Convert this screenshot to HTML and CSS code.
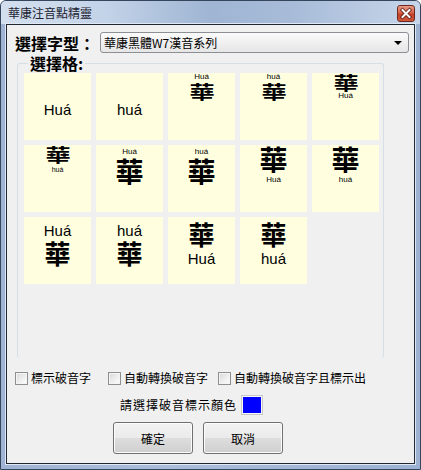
FILE: index.html
```html
<!DOCTYPE html>
<html lang="zh-Hant">
<head>
    <meta charset="UTF-8">
    <title>華康注音點精靈</title>
    <link rel="stylesheet" href="styles.css">
</head>
<body>
    <div class="window">
        <div class="titlebar">
            <span class="title">華康注音點精靈</span>
            <span class="close">
                <svg width="16" height="15" viewBox="0 0 16 15">
                    <path d="M4.5 4 L11.5 11 M11.5 4 L4.5 11" stroke="#5a1a10" stroke-width="3.6" stroke-linecap="square"/>
                    <path d="M4.5 4 L11.5 11 M11.5 4 L4.5 11" stroke="#fff" stroke-width="2" stroke-linecap="square"/>
                </svg>
            </span>
        </div>
        <div class="client">
            <div class="font-row">
                <span class="font-label">選擇字型：</span>
                <div class="select">
                    <span class="select-text">華康黑體W7漢音系列</span>
                    <span class="arrow"></span>
                </div>
            </div>

            <fieldset class="group">
                <legend>選擇格:</legend>
                <div class="grid">
                    <!-- row 1 -->
                    <div class="tile t1"><span class="py-l">Huá</span></div>
                    <div class="tile t1"><span class="py-l">huá</span></div>
                    <div class="tile t3"><span class="py-s">Huá</span><span class="han-sq">華</span></div>
                    <div class="tile t3"><span class="py-s">huá</span><span class="han-sq">華</span></div>
                    <div class="tile t5"><span class="han-sq">華</span><span class="py-s">Huá</span></div>
                    <!-- row 2 -->
                    <div class="tile t6"><span class="han-sq">華</span><span class="py-xs">huá</span></div>
                    <div class="tile t7"><span class="py-s">Huá</span><span class="han-l">華</span></div>
                    <div class="tile t7"><span class="py-s">huá</span><span class="han-l">華</span></div>
                    <div class="tile t9"><span class="han-l">華</span><span class="py-s">Huá</span></div>
                    <div class="tile t9"><span class="han-l">華</span><span class="py-s">huá</span></div>
                    <!-- row 3 -->
                    <div class="tile t11"><span class="py-l">Huá</span><span class="han-m">華</span></div>
                    <div class="tile t11"><span class="py-l">huá</span><span class="han-m">華</span></div>
                    <div class="tile t13"><span class="han-m">華</span><span class="py-l">Huá</span></div>
                    <div class="tile t13"><span class="han-m">華</span><span class="py-l">huá</span></div>
                </div>
            </fieldset>

            <div class="options">
                <label class="check"><span class="box"></span>標示破音字</label>
                <label class="check"><span class="box"></span>自動轉換破音字</label>
                <label class="check"><span class="box"></span>自動轉換破音字且標示出</label>
            </div>

            <div class="color-row">
                <span class="color-label">請選擇破音標示顏色</span>
                <span class="swatch"></span>
            </div>

            <div class="buttons">
                <button class="btn">確定</button>
                <button class="btn">取消</button>
            </div>
        </div>
    </div>
</body>
</html>
```

FILE: styles.css
```css
body {
    margin: 0;
    font-family: "Noto Sans CJK TC", sans-serif;
    font-size: 12px;
    color: #000;
}
.window {
    width: 421px;
    height: 470px;
    box-sizing: border-box;
    border: 1px solid #34455c;
    border-radius: 6px 6px 0 0;
    background: linear-gradient(to right, #9fb4d4, #a9bddb 40%, #9cb2d3);
    display: flex;
    flex-direction: column;
}
.titlebar {
    height: 23px;
    display: flex;
    align-items: flex-start;
    border-radius: 5px 5px 0 0;
    background: linear-gradient(to right, #d3dfee 0%, #c3d3e8 25%, #9fb5d3 50%, #a8bcd9 70%, #c6d5e9 100%);
}
.title {
    margin: 4px 0 0 7px;
    font-size: 12px;
    line-height: 16px;
    color: #1c2230;
}
.close {
    margin: 4px 5px 0 auto;
    width: 16px;
    height: 15px;
    border: 1px solid #6e2a1c;
    border-radius: 3px;
    background: linear-gradient(#e89a86, #d7644a 45%, #c3402a 55%, #d2583c);
    display: flex;
}
.client {
    flex: 1;
    margin: 0 5px 5px;
    border: 1px solid #202833;
    box-shadow: 0 0 0 1px #dfe8f4;
    background: #f0f0f0;
    display: flex;
    flex-direction: column;
}
.font-row {
    display: flex;
    align-items: center;
    margin: 7px 5px 0 8px;
}
.font-label {
    width: 85px;
    font-size: 16px;
    font-weight: 700;
    line-height: 20px;
}
.select {
    flex: 1;
    height: 19px;
    border: 1px solid #8c8f94;
    border-radius: 3px;
    background: linear-gradient(#fbfbfb, #f0f0f0 50%, #e6e6e6);
    display: flex;
    align-items: center;
    padding: 0 6px 0 3px;
}
.select-text {
    flex: 1;
    line-height: 16px;
}
.arrow {
    width: 0;
    height: 0;
    border-left: 4px solid transparent;
    border-right: 4px solid transparent;
    border-top: 4px solid #000;
}

/* group box with the tiles */
.group {
    margin: 3px 30px 0 10px;
    padding: 0 0 74px 6px;
    border: 1px solid #d5dfe5;
    border-bottom: none;
    border-radius: 3px;
    min-width: 0;
}
.group legend {
    margin-left: 4px;
    padding: 0 2px;
    font-size: 16px;
    font-weight: 700;
    line-height: 14px;
}
.grid {
    display: grid;
    grid-template-columns: repeat(5, 67px);
    grid-auto-rows: 67px;
    gap: 5px;
    margin-top: 3px;
}
.tile {
    background: #ffffe0;
    display: flex;
    flex-direction: column;
    align-items: center;
    overflow: hidden;
}
.py-l, .py-s, .py-xs {
    font-family: "Liberation Sans", Arial, sans-serif;
    display: block;
}
.py-l {
    font-size: 15px;
    line-height: 15px;
}
.py-s {
    font-size: 8px;
    line-height: 8px;
}
.py-xs {
    font-size: 7px;
    line-height: 7px;
}
.han-l, .han-m, .han-sq {
    display: block;
    font-weight: 700;
}
.han-l {
    font-size: 28px;
    line-height: 28px;
}
.han-m {
    font-size: 26px;
    line-height: 26px;
}
.han-sq {
    font-size: 18px;
    line-height: 18px;
    transform: scaleX(1.4);
}
.t1 { padding-top: 29px; }
.t3 { padding-top: 0; }
.t3 .han-sq { margin-top: 1px; }
.t5 { padding-top: 0; }
.t5 .py-s { margin-top: 1px; }
.t6 { padding-top: 0; }
.t6 .py-xs { margin-top: 3px; }
.t7 { padding-top: 3px; }
.t7 .han-l { margin-top: 1px; }
.t9 { padding-top: 0; }
.t9 .py-s { margin-top: 3px; }
.t11 { padding-top: 6px; }
.t11 .han-m { margin-top: 2px; }
.t13 { padding-top: 4px; }
.t13 .py-l { margin-top: 4px; }

/* bottom controls */
.options {
    display: grid;
    grid-template-columns: 93px 110px auto;
    margin: 13px 0 0 8px;
}
.check {
    display: flex;
    align-items: center;
    line-height: 14px;
}
.box {
    width: 11px;
    height: 11px;
    margin-right: 3px;
    border: 1px solid #8e8f8f;
    background: linear-gradient(135deg, #d8d8d8, #f4f4f4 70%, #fff);
    box-shadow: inset 0 0 0 1px #f4f4f4;
}
.color-row {
    display: flex;
    align-items: center;
    margin: 11px 0 0 113px;
}
.color-label {
    letter-spacing: 1px;
    line-height: 16px;
}
.swatch {
    width: 18px;
    height: 16px;
    margin-left: 5px;
    border: 1px solid #f8f8f8;
    outline: 1px solid #c8c8c8;
    background: #0000ff;
}
.buttons {
    display: flex;
    gap: 10px;
    margin: 8px 0 0 106px;
}
.btn {
    width: 80px;
    height: 32px;
    border: 1px solid #707070;
    border-radius: 3px;
    background: linear-gradient(#f2f2f2, #ebebeb 50%, #dddddd 51%, #cfcfcf);
    box-shadow: inset 0 0 0 1px #fcfcfc;
    font-family: "Noto Sans CJK TC", sans-serif;
    font-size: 12px;
    color: #000;
    padding: 0;
}
```
